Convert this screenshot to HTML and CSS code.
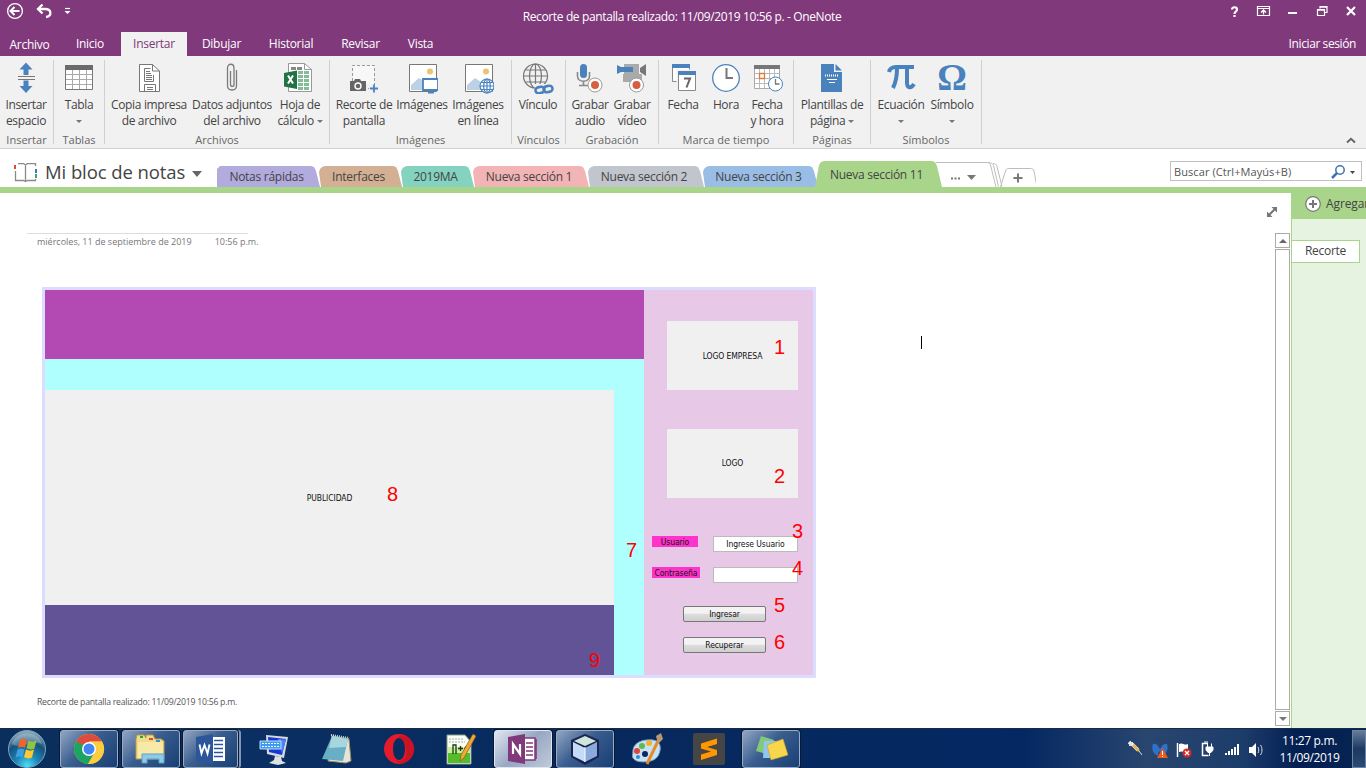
FILE: index.html
```html
<!DOCTYPE html>
<html lang="es">
<head>
<meta charset="utf-8">
<title>OneNote</title>
<link rel="stylesheet" href="styles.css">
</head>
<body>
<div class="app">
<header class="titlebar">
  <div class="quick">
    <svg width="80" height="24" viewBox="0 0 80 24" fill="none" stroke="#fff"><circle cx="15" cy="11" r="7.4" stroke-width="1.3"/><path d="M11 11h8.500M14.500 7l-4 4 4 4" stroke-width="2"/><path d="M39 9h6c7 0 7 7 1 8" stroke-width="2.300"/><path d="M42.500 4.500L38 9l4.500 4.500" stroke-width="2.300"/><path d="M65 8.500h5" stroke-width="1.200"/><path d="M64.500 11h6l-3 3z" fill="#fff" stroke="none"/></svg>
  </div>
  <div class="title">Recorte de pantalla realizado: 11/09/2019 10:56 p. - OneNote</div>
  <div class="winbtns">
    <svg width="146" height="24" viewBox="1220 0 146 24" fill="none" stroke="#fff"><path d="M1232 9.500c0-3 5-3 5 0 0 2-2.500 2-2.500 4.500M1234.500 15v2" stroke-width="2.200"/><path d="M1257.500 6.500h12v9h-12zM1257 8.500h13" stroke-width="1.200"/><path d="M1263.500 14.500v-4M1261 12.500l2.500-2.500 2.500 2.500" stroke-width="1.300"/><path d="M1288 13h9" stroke-width="2"/><path d="M1317.500 9.500h7v6h-7zM1317.500 10.200h7M1320 8.500v-2h7v6h-2M1320 7.200h7" stroke-width="1.200"/><path d="M1347 7l8 8M1355 7l-8 8" stroke-width="2.200"/></svg>
  </div>
</header>
<nav class="tabs">
  <a class="file">Archivo</a><a class="t-inicio">Inicio</a><a class="on">Insertar</a><a class="t-dib">Dibujar</a><a class="t-hist">Historial</a><a class="t-rev">Revisar</a><a class="t-vista">Vista</a><a class="login">Iniciar sesión</a>
</nav>
<section class="ribbon">
  <div class="group g1"><div class="btns">
    <div class="btn w52"><svg class="ic" viewBox="0 0 32 32"><path d="M16 0.500l6.500 7h-4v5.500h-5V7.500h-4zM16 31l6.500-7h-4v-5.500h-5V24h-4z" fill="#4a82bd"/><path d="M8 14.500h17M8 17.500h17" stroke="#777"/></svg><span>Insertar<br>espacio</span></div>
  </div><div class="cap">Insertar</div></div>
  <div class="group g2"><div class="btns">
    <div class="btn w50"><svg class="ic" viewBox="0 0 32 32"><path d="M2.500 3.500h27v24h-27z" fill="#fff" stroke="#777"/><path d="M2 3h28v5H2z" fill="#6b6b6b"/><path d="M3 12.500h26M3 17.500h26M3 22.500h26M9.500 8v19M16.500 8v19M23.500 8v19" stroke="#aaa"/></svg><span>Tabla<br><i class="dn"></i></span></div>
  </div><div class="cap">Tablas</div></div>
  <div class="group g3"><div class="btns">
    <div class="btn w84"><svg class="ic" viewBox="0 0 32 32" fill="none" stroke="#777"><path d="M6.500 2.500h13l7 6.500v20.500h-20z" fill="#fff"/><path d="M19.500 2.500v6.500h7"/><path d="M20.500 13v6.500h-9v-13h6M11.500 29V22.500h11V29"/><path d="M13 9.500h4M13 11.500h5M13 13.500h6M13 15.500h6M13 17.500h6M14 25.500h6M14 27.500h6"/></svg><span>Copia impresa<br>de archivo</span></div>
    <div class="btn w82"><svg class="ic" viewBox="0 0 32 32" fill="none" stroke="#7c7c7c" stroke-width="1.300"><path d="M20.500 8v15.500c0 6-9 6-9 0V6c0-5 6.500-5 6.500 0v16.500c0 2.600-3.500 2.600-3.500 0V9"/></svg><span>Datos adjuntos<br>del archivo</span></div>
    <div class="btn w54"><svg class="ic" viewBox="0 0 32 32"><path d="M4.500 1.500h16l7 6v22h-23z" fill="#fff" stroke="#999"/><path d="M20.500 1.500v6h7" fill="none" stroke="#999"/><path d="M7 5h5v3H7zM13 5h5v3h-5z" fill="#888"/><path d="M14 9h5v3h-5zM20 9h5v3h-5zM14 13h5v3h-5zM20 13h5v3h-5zM14 17h5v3h-5zM20 17h5v3h-5zM14 21h5v3h-5zM20 21h5v3h-5zM14 25h5v3h-5zM20 25h5v3h-5z" fill="#83bd98"/><path d="M0 11l13-2.500v18.500L0 24.500z" fill="#217346"/><path d="M4 13.500l5 8M9 13.500l-5 8" stroke="#fff" stroke-width="2"/></svg><span>Hoja de<br>cálculo <i class="dn"></i></span></div>
  </div><div class="cap">Archivos</div></div>
  <div class="group g4"><div class="btns">
    <div class="btn w60"><svg class="ic" viewBox="0 0 32 32"><path d="M4.500 19V3.500h22V23M15 26.500h6" fill="#f8f8f8" stroke="#999" stroke-dasharray="3 2"/><path d="M2 19h4l1-2h5l1 2h5v10H2z" fill="#666"/><circle cx="10" cy="24" r="3" fill="none" stroke="#fff" stroke-width="1.400"/><path d="M22 26.500h8M26 22.500v8" stroke="#4a82bd" stroke-width="1.800"/></svg><span>Recorte de<br>pantalla</span></div>
    <div class="btn w56"><svg class="ic" viewBox="0 0 32 32"><path d="M3.500 2.500h27v27h-27z" fill="#fff" stroke="#777"/><circle cx="24" cy="9.500" r="3" fill="#edc273"/><path d="M5 28V23l8-7 5 3v9z" fill="#bdd1e6"/><path d="M17 17h15v11H17z" fill="#fff" stroke="#4a82bd" stroke-width="1.800"/><path d="M22 30.500h6" stroke="#4a82bd" stroke-width="2"/></svg><span>Imágenes</span></div>
    <div class="btn w56"><svg class="ic" viewBox="0 0 32 32"><path d="M3.500 2.500h27v27h-27z" fill="#fff" stroke="#777"/><circle cx="24" cy="9.500" r="3" fill="#edc273"/><path d="M5 28V23l8-7 6 4v8z" fill="#bdd1e6"/><g fill="#fff" stroke="#4a82bd" stroke-width="1.200"><circle cx="25" cy="24" r="7"/><ellipse cx="25" cy="24" rx="3.300" ry="7"/><path d="M18 24h14M19 20.500h12M19 27.500h12M25 17v14"/></g></svg><span>Imágenes<br>en línea</span></div>
  </div><div class="cap">Imágenes</div></div>
  <div class="group g5"><div class="btns">
    <div class="btn w52"><svg class="ic" viewBox="0 0 32 32" fill="none"><g stroke="#777" stroke-width="1.200"><circle cx="13.500" cy="14" r="12"/><ellipse cx="13.500" cy="14" rx="6" ry="12"/><path d="M1.500 14h24M13.500 2v24M3.500 8h20M3.500 20h20"/></g><path d="M12 22h20v10H14z" fill="#f1f1f1"/><g stroke="#4a82bd" stroke-width="2.600"><rect x="13.500" y="25" width="9" height="6" rx="3" transform="rotate(-12 18 28)"/><rect x="21.500" y="24" width="9" height="6" rx="3" transform="rotate(-12 26 27)"/></g></svg><span>Vínculo</span></div>
  </div><div class="cap">Vínculos</div></div>
  <div class="group g6"><div class="btns">
    <div class="btn w42"><svg class="ic" viewBox="0 0 32 32"><rect x="6" y="2" width="7" height="14" rx="3.500" fill="#4a82bd"/><path d="M3.500 10v4c0 7 12 7 12 0v-4M9.500 19v4M5 23.500h9" fill="none" stroke="#888" stroke-width="1.600"/><circle cx="21" cy="23" r="7" fill="#fff" stroke="#999"/><circle cx="21" cy="23" r="4" fill="#d85e40"/></svg><span>Grabar<br>audio</span></div>
    <div class="btn w42"><svg class="ic" viewBox="0 0 32 32"><path d="M8 2h15v12H8z" fill="#aaa"/><path d="M7 12h19v8H7z" fill="#aaa"/><path d="M1 3l4 2h12v5H5l-4 2z" fill="#4a82bd"/><path d="M24 6l6-4v12l-6-4z" fill="#777"/><circle cx="20.500" cy="23" r="7" fill="#fff" stroke="#999"/><circle cx="20.500" cy="23" r="4" fill="#d85e40"/></svg><span>Grabar<br>vídeo</span></div>
  </div><div class="cap">Grabación</div></div>
  <div class="group g7"><div class="btns">
    <div class="btn w42"><svg class="ic" viewBox="0 0 32 32"><path d="M5.500 2.500h17v17h-17z" fill="#fff" stroke="#888"/><path d="M5 2h18v4H5z" fill="#4a82bd"/><path d="M9.500 7.500h21v23h-21z" fill="#f1f1f1"/><path d="M11.500 9.500h17v19h-17z" fill="#fff" stroke="#888"/><path d="M11 9h18v4H11z" fill="#4a82bd"/><path d="M17 16.500h6l-3.500 9" fill="none" stroke="#666" stroke-width="2"/></svg><span>Fecha</span></div>
    <div class="btn w44"><svg class="ic" viewBox="0 0 32 32" fill="none"><circle cx="16" cy="16" r="13.300" fill="#fff" stroke="#4a82bd" stroke-width="1.300"/><path d="M16.500 6v10H23" stroke="#777" stroke-width="2"/></svg><span>Hora</span></div>
    <div class="btn w38"><svg class="ic" viewBox="0 0 32 32" fill="none"><path d="M3.500 3.500h25v23h-25z" fill="#fff" stroke="#aaa"/><path d="M3 3h26v4H3z" fill="#777"/><path d="M4 11.500h24M4 16.500h24M4 21.500h24M8.500 7v19M13.500 7v19M18.500 7v19M23.500 7v19" stroke="#bbb"/><path d="M8.500 11.500h5v5h-5z" stroke="#e07b39" stroke-width="1.300"/><circle cx="24.500" cy="22" r="7" fill="#fff" stroke="#4a82bd"/><path d="M24.500 17v5h4" stroke="#777" stroke-width="1.300"/></svg><span>Fecha<br>y hora</span></div>
  </div><div class="cap">Marca de tiempo</div></div>
  <div class="group g8"><div class="btns">
    <div class="btn w76"><svg class="ic" viewBox="0 0 32 32"><path d="M5 2h13v8h8v20H5z" fill="#4a82bd"/><path d="M19.500 2l6.500 6.500h-6.500z" fill="#4a82bd"/><path d="M9 13.500h14" stroke="#fff" stroke-width="2" stroke-dasharray="1 1"/><path d="M11 17.500h10M13 20.500h6" stroke="#fff"/></svg><span>Plantillas de<br>página <i class="dn"></i></span></div>
  </div><div class="cap">Páginas</div></div>
  <div class="group g9"><div class="btns">
    <div class="btn w52"><svg class="ic" viewBox="0 0 32 32" fill="none" stroke="#4a82bd"><path d="M4 10c1-4 3-5 7-5h18" stroke-width="4"/><path d="M12 6c0 9-1 14-4 20" stroke-width="4"/><path d="M22 6v15c0 5 4 6 7 1" stroke-width="4"/></svg><span>Ecuación<br><i class="dn"></i></span></div>
    <div class="btn w50"><div class="ic glyph">Ω</div><span>Símbolo<br><i class="dn"></i></span></div>
  </div><div class="cap">Símbolos</div></div>
  <svg class="collapse" width="10" height="7" viewBox="0 0 10 7"><path d="M1 5.500l4-3.700 4 3.700" fill="none" stroke="#666" stroke-width="2"/></svg>
</section>
<section class="notebook">
  <svg class="book" width="24" height="20" viewBox="0 0 24 20" fill="none" stroke="#8a8a8a"><path d="M4 .5h5.500l2 1.500 2-1.500h8V3M1.500 8v9.500h8l2 1 2-1h8V16M11.500 2v16" stroke-width="1.300"/><path d="M1 2v4" stroke="#e04b2e" stroke-width="2"/><path d="M22 6v4" stroke="#3878b4" stroke-width="2"/><path d="M22 11v4" stroke="#3fa173" stroke-width="2"/></svg>
  <div class="nbname">Mi bloc de notas</div><i class="dn big"></i>
  <div class="sections">
    <div class="sec s1">Notas rápidas</div><div class="sec s2">Interfaces</div><div class="sec s3">2019MA</div><div class="sec s4">Nueva sección 1</div><div class="sec s5">Nueva sección 2</div><div class="sec s6">Nueva sección 3</div><div class="sec s7">Nueva sección 11</div>
    <svg class="more" width="100" height="26" viewBox="936 161 100 26" fill="none" stroke="#bdbdbd"><path d="M936 162.500h51c2 0 3 1 3.500 2.500l5.500 22M988 162.500c4 0 5 2 5.500 3l5 21M993 163.500c2 0 3.500 1 4 3l5 20" /><path d="M1000.500 187l5-16c.5-1.500 1-2.500 3-2.500h22c2 0 3 1 3.500 2.500l3 16"/><path d="M951 178.500h2M954.500 178.500h2M958 178.500h2" stroke="#777" stroke-width="2"/><path d="M967 175h9l-4.500 5z" fill="#777" stroke="none"/><path d="M1013.500 178h9M1018 173.500v9" stroke="#777" stroke-width="2"/></svg>
  </div>
  <div class="search"><span>Buscar (Ctrl+Mayús+B)</span><svg width="26" height="16" viewBox="0 0 26 16" fill="none"><circle cx="9" cy="6" r="4.200" stroke="#3c74b5" stroke-width="1.500"/><path d="M6 9L1 14" stroke="#3c74b5" stroke-width="2.500"/><path d="M19 7h5l-2.500 3z" fill="#444"/></svg></div>
</section>
<main class="work">
  <div class="page">
    <div class="note">
      <div class="dateline"><span>miércoles, 11 de septiembre de 2019</span><span>10:56 p.m.</span></div>
      <div class="mock">
        <div class="m-head"></div><div class="m-cyan"></div>
        <div class="m-pub">PUBLICIDAD</div><div class="m-foot"></div>
        <div class="m-side">
          <div class="logo">LOGO EMPRESA</div>
          <div class="logo second">LOGO</div>
          <div class="field"><label>Usuario</label><div class="input">Ingrese Usuario</div></div>
          <div class="field f2"><label class="l2">Contraseña</label><div class="input"></div></div>
          <div class="mbtn">Ingresar</div><div class="mbtn b2">Recuperar</div>
        </div>
        <b class="num n1">1</b><b class="num n2">2</b><b class="num n3">3</b><b class="num n4">4</b><b class="num n5">5</b><b class="num n6">6</b><b class="num n7">7</b><b class="num n8">8</b><b class="num n9">9</b>
      </div>
      <div class="caption">Recorte de pantalla realizado: 11/09/2019 10:56 p.m.</div>
    </div>
    <div class="caret"></div>
    <div class="rail">
      <svg class="expand" width="12" height="12" viewBox="0 0 12 12"><path d="M3 9l6-6" stroke="#777" stroke-width="2"/><path d="M5.500 1H11v5.500zM1 5.500V11h5.500z" fill="#777"/></svg>
      <div class="sbtn"><i class="up"></i></div><div class="thumb"></div><div class="sbtn"><i class="dn sdn"></i></div>
    </div>
  </div>
  <aside class="pages">
    <div class="add"><svg width="18" height="18" viewBox="0 0 18 18"><circle cx="9" cy="9" r="7.300" fill="#fff" stroke="#777" stroke-width="1.200"/><path d="M5 9h8M9 5v8" stroke="#777" stroke-width="2"/></svg><span>Agregar</span></div>
    <div class="pagetab">Recorte</div>
  </aside>
</main>
<footer class="taskbar">
  <div class="start"><svg width="40" height="40" viewBox="0 0 40 40"><defs><radialGradient id="orb" cx=".5" cy=".95" r=".9"><stop offset="0" stop-color="#4fe0f5"/><stop offset=".35" stop-color="#1c86b8"/><stop offset=".7" stop-color="#17517c"/><stop offset="1" stop-color="#85a6ba"/></radialGradient></defs><circle cx="20" cy="20" r="18.500" fill="url(#orb)" stroke="#7ba4bd"/><path d="M5 15c3-14 27-14 30 0-8-5-22 6-30 0z" fill="#fff" opacity=".25"/><path d="M13 11c3-2 5-1.500 7 0l-2 8c-2-1.500-4-1.500-7 0z" fill="#f0632c"/><path d="M21.500 11.500c3 1.500 5 1.500 8 0l-2 8c-3 1.500-5 1.200-8-.5z" fill="#8cc63e"/><path d="M10.500 20.500c3-1.500 5-1.500 7 0l-2 8c-2-1.500-4-1.500-7 0z" fill="#3b9fe0"/><path d="M19 20.500c3 1.500 5 1.500 8 0l-2 8c-3 1.500-5 1.200-8-.5z" fill="#fdc830"/></svg></div>
  <div class="slot"><div class="tb"><svg width="32" height="32" viewBox="0 0 32 32"><circle cx="16" cy="16" r="15" fill="#fbc116"/><path d="M16 16L3 8.500A15 15 0 0 1 29 8.500H16z" fill="#dd4b3e"/><path d="M3 8.500A15 15 0 0 0 15 31l7-12-6-3z" fill="#1da462"/><path d="M3 8.500L9.500 20l7-5z" fill="#1da462"/><path d="M16 8.500h13A15 15 0 0 1 15 31l7-12z" fill="#fccd40"/><circle cx="16" cy="16" r="7" fill="#fff"/><circle cx="16" cy="16" r="5.500" fill="#4285f4"/></svg></div></div>
  <div class="slot"><div class="tb"><svg width="36" height="34" viewBox="0 0 36 34"><path d="M3 7l1-4h7l2 3V3h7l2 4h6l3 2v18H3z" fill="#f2dc8c" stroke="#b99a45"/><path d="M5 10h25v16H5z" fill="#f9e9a9"/><path d="M7 4h3v2H7z" fill="#2aa63a"/><path d="M16 6h4v2h-4z" fill="#d84c30"/><path d="M23 8h4v2h-4z" fill="#348fd6"/><path d="M9 31V22h22v9h-5v-4H14v4z" fill="#8fcbe8" stroke="#5ba1c6"/></svg></div></div>
  <div class="slot"><div class="tb stack"><svg width="32" height="32" viewBox="0 0 32 32"><path d="M17 4h13v24H17z" fill="#fff"/><path d="M19 7.500h9M19 11.500h9M19 15.500h9M19 19.500h9M19 23.500h9" stroke="#2b579a" stroke-width="1.500"/><path d="M1 4l17-3v30L1 28z" fill="#2b579a"/><path d="M4.500 11.500l2 9 3-8.500 3 8.500 2-9" fill="none" stroke="#fff" stroke-width="1.900"/></svg></div></div>
  <div class="slot"><svg width="34" height="34" viewBox="0 0 34 34"><path d="M8 3l22 2-4 21-17-4z" fill="#d5d9dc"/><path d="M10 5l18 2-4 16-13-3z" fill="#1639d5"/><path d="M20 7l8 .5-4 14z" fill="#4e80fa"/><path d="M17 24l6 1 1 4 4 2-8 2-9-2 5-3z" fill="#dfe2e4"/><path d="M2 9h21v8H2z" fill="#3d9cf0" stroke="#bce0ff"/><path d="M4 11.500h17M4 14.500h17" stroke="#fff" stroke-dasharray="2 1"/></svg></div>
  <div class="slot"><svg width="34" height="34" viewBox="0 0 34 34"><path d="M12 4l17 3 2 22-5 2-18-2z" fill="#e5e4d8" stroke="#988b63"/><path d="M12 4l16 3-5 22L2 27z" fill="#68aec5"/><path d="M12 4l16 3-2 8-17 1z" fill="#a7d6df"/><path d="M11 3l18 3" stroke="#ddd" stroke-width="2" stroke-dasharray="1 1"/></svg></div>
  <div class="slot"><svg width="32" height="32" viewBox="0 0 32 32"><path fill-rule="evenodd" d="M16 1a15 15 0 1 0 0 30 15 15 0 0 0 0-30zM16 5c8 0 8 22 0 22S8 5 16 5z" fill="#e51b2c"/><path d="M21 2c14 6 14 23 0 28-4 1-7-.5-9-3 14 6 15-18 3-22 1-2 3-3 6-3z" fill="#b40b20" opacity=".5"/></svg></div>
  <div class="slot"><svg width="34" height="34" viewBox="0 0 34 34"><path d="M3 3h18l6 7v22H3z" fill="#fafff4" stroke="#8b9b87"/><path d="M4 20h22v11H4z" fill="#56bc2c"/><path d="M4 15h22v6H4z" fill="#c9ef9c"/><path d="M5 7h14M5 10h16" stroke="#aaa" stroke-dasharray="2 1"/><path d="M9 22v-9h3v9M14 16.500h5M16.500 14v5M20 16.500h4M22 14v5" fill="none" stroke="#183712" stroke-width="1.300"/><path d="M29 2l3 2-12 22-4 3 1-6z" fill="#edac30" stroke="#8f5825" stroke-width=".7"/></svg></div>
  <div class="slot"><div class="tb active"><svg width="32" height="32" viewBox="0 0 32 32"><path d="M17 5h11v22H17z" fill="#fff" stroke="#80397b" stroke-width="1.500"/><path d="M19 10h7M19 14h7M19 18h7M19 22h7M29 6v20" stroke="#80397b" stroke-width="1.600"/><path d="M1 4l17-3v30L1 28z" fill="#80397b"/><path d="M6 21V11l7 10V11" fill="none" stroke="#fff" stroke-width="2.200"/></svg></div></div>
  <div class="slot"><div class="tb"><svg width="34" height="34" viewBox="0 0 34 34"><path d="M17 2l14 6v17l-14 8-14-8V8z" fill="#1b2350"/><path d="M17 4l11 5-11 5L6 9z" fill="#cfe6dc"/><path d="M5 10l12 6v14L5 24z" fill="#c4daf6"/><path d="M29 10l-12 6v14l12-6z" fill="#8ba9dc"/><path d="M17 15v15" stroke="#fff"/></svg></div></div>
  <div class="slot"><svg width="34" height="34" viewBox="0 0 34 34"><path d="M3 18C4 10 14 7 23 8c8 1 9 9 5 16S9 31 5 28s-2-4-2-10z" fill="#c8e2f4" stroke="#789fc5"/><circle cx="15" cy="22" r="3" fill="#082b63"/><circle cx="7" cy="19" r="3" fill="#d94838"/><circle cx="12" cy="14" r="3" fill="#64b74c"/><circle cx="19" cy="11" r="3" fill="#edb331"/><circle cx="8" cy="25" r="2" fill="#3486d8"/><path d="M29 7L17 32" stroke="#e78b26" stroke-width="3"/><path d="M26 4l5-3 2 6-5 5z" fill="#b99871"/></svg></div>
  <div class="slot"><svg width="32" height="32" viewBox="0 0 32 32"><rect width="32" height="32" rx="2" fill="#454545"/><path d="M8 10.500l16-5v5.500l-10 3 10 3v5L8 27v-5.500l10-3-10-3z" fill="#ff9800"/></svg></div>
  <div class="slot"><div class="tb"><svg width="34" height="34" viewBox="0 0 34 34"><path d="M7 4l13 4-4 15L2 19z" fill="#83c977"/><path d="M10 9h14v17H9z" fill="#8fc7f3"/><path d="M13 13l16-6 5 16-17 5z" fill="#f7d64c" stroke="#c99c2a" stroke-width=".6"/></svg></div></div>
  <div class="tray">
    <svg width="145" height="24" viewBox="1123 736 145 24" fill="none"><path d="M1129 741l3 3M1132 743l6 6" stroke="#eee" stroke-width="3.500"/><path d="M1133 744l6 6" stroke="#e5b24b" stroke-width="2.500"/><path d="M1139 750l3 4M1129 745l4-4" stroke="#ddd"/><path d="M1153 743c4-1 5 2 7 5 2-3 4-6 7-5 2 5-1 11-5 12 0-4 0-3-2-5-2 2-2 2-2 5-5-2-7-7-5-12z" fill="#2e71c5"/><path d="M1162.500 747l5.500 10h-11z" fill="#ef5a1b"/><path d="M1162.500 750v4M1162.500 755v1" stroke="#fff"/><path d="M1177.500 742v14" stroke="#fff" stroke-width="1.500"/><path d="M1179 743c4-2 5 2 9 0v8c-4 2-5-2-9 0z" fill="#fff"/><circle cx="1187" cy="752" r="4.500" fill="#d72822"/><path d="M1185 750l4 4M1189 750l-4 4" stroke="#fff" stroke-width="1.300"/><path d="M1208 742.500h-5.500v12h6" stroke="#fff" stroke-width="1.500"/><path d="M1204 741h4" stroke="#fff"/><path d="M1206 746h7v3l-2 2.500h-3l-2-2.500zM1207.500 742.500v4M1211.500 742.500v4M1209.500 751v4" fill="#fff" stroke="#fff"/><path d="M1226 752v2M1229 750v4M1232 748v6M1235 746v8M1238 743v11" stroke="#fff" stroke-width="2"/><path d="M1249 746h3l4-4v14l-4-4h-3z" fill="#fff"/><path d="M1258 746c1 2 1 4 0 6M1260.500 744c2 3 2 7 0 10" stroke="#ddd"/></svg>
    <div class="clock">11:27 p.m.<br>11/09/2019</div><div class="desk"></div>
  </div>
</footer>
</div>
</body>
</html>
```
FILE: styles.css
```css
*{box-sizing:border-box}
body{margin:0;width:1366px;height:768px;overflow:hidden;font:12px/16px "Open Sans","Noto Sans",sans-serif;letter-spacing:-.27px;color:#444;background:#fff}
svg{display:block;flex:none}
.app{width:1366px;height:768px;display:flex;flex-direction:column;overflow:hidden}
.titlebar{height:32px;background:#80397b;color:#fff;display:grid;grid-template-columns:146px 1fr 146px;flex:none}
.title{text-align:center;padding:9px 2px 0 0;white-space:nowrap;letter-spacing:-.37px}
.tabs{height:24px;background:#80397b;color:#fff;display:flex;line-height:24px;flex:none;white-space:nowrap}
.tabs a{text-align:center}
.file{width:59px;line-height:26px}
.t-inicio{width:62px}
.on{width:66px;background:#f1f1f1;color:#80397b}
.t-dib{width:69px}
.t-hist{width:70px}
.t-rev{width:69px}
.t-vista{width:51px}
.tabs .login{margin-left:auto;padding-right:10px;letter-spacing:-.4px}
.ribbon{height:93px;background:#f1f1f1;border-bottom:1px solid #d0d0d0;display:flex;padding-top:4px;position:relative;flex:none}
.group{height:84px;border-right:1px solid #d0d0d0;display:flex;flex-direction:column;flex:none}
.g1{width:54px}.g2{width:51px}.g3{width:225px}.g4{width:182px}.g5{width:54px}.g6{width:93px}.g7{width:135px}.g8{width:77px}.g9{width:111px}
.btns{display:flex;height:72px;flex:none}
.g3 .btns{padding-left:2px}.g4 .btns{padding-left:4px}.g6 .btns,.g7 .btns{padding-left:3px}.g9 .btns{padding-left:4px}
.btn{display:flex;flex-direction:column;align-items:center;flex:none;padding-top:2px;text-align:center;white-space:nowrap;letter-spacing:-.35px}
.ic{width:32px;height:32px;margin-bottom:3px}
.glyph{font:bold 37px/32px "Liberation Serif",serif;color:#4a82bd;text-align:center;letter-spacing:0}
.w52{width:52px}.w50{width:50px}.w84{width:84px}.w82{width:82px}.w54{width:54px}.w60{width:60px}.w56{width:56px}.w42{width:42px}.w44{width:44px}.w38{width:38px}.w76{width:76px}
.cap{text-align:center;color:#666;font-size:11px;line-height:16px;letter-spacing:0;flex:none}
.dn{display:inline-block;border:3px solid transparent;border-top:3px solid #777;border-bottom:0;vertical-align:2px}
.up{display:block;border:4px solid transparent;border-bottom:4px solid #666;border-top:0}
.sdn{border-width:4px 4px 0}
.collapse{margin:77px 10px 0 auto}
.notebook{height:44px;border-bottom:6px solid #a9d58b;display:flex;flex:none;position:relative}
.book{margin:14px 0 0 14px}
.nbname{font-size:18.500px;line-height:28px;margin:9px 0 0 7px;width:141px;white-space:nowrap;letter-spacing:-.08px}
.dn.big{border-width:6px 5.500px 0;border-top-color:#666;margin:22px 0 0 6px;align-self:flex-start}
.sections{display:flex;align-items:flex-end;margin-left:15px;width:820px;flex:none}
.sec{height:21px;line-height:21px;text-align:center;white-space:nowrap;flex:none;padding-right:4px;margin-right:-1px;clip-path:polygon(2px 100%,0 6px,1px 3px,3px 1px,6px 0,calc(100% - 9px) 0,calc(100% - 6px) 1px,calc(100% - 4px) 5px,100% 100%)}
.s1{width:103px;background:#b2abde;clip-path:polygon(0 100%,0 3px,3px 0,calc(100% - 9px) 0,calc(100% - 6px) 1px,calc(100% - 4px) 5px,100% 100%)}
.s2{width:83px;background:#d3b094}.s3{width:73px;background:#84d3c0}.s4{width:116px;background:#f2b4b4}.s5{width:116px;background:#c1c5cd}.s6{width:115px;background:#99bde5}
.s7{width:127px;height:26px;line-height:27px;background:#a9d58b;margin-left:-2px;clip-path:polygon(0 100%,4px 4px,6px 1px,9px 0,calc(100% - 10px) 0,calc(100% - 7px) 1px,calc(100% - 5px) 5px,100% 100%)}
.more{margin-left:-5px}
.search{width:192px;height:20px;border:1px solid #c0c0c0;margin:12px 4px 0 auto;padding:2px 4px 0 3px;display:flex;justify-content:space-between;font-size:11px;letter-spacing:.08px;white-space:nowrap;color:#555}
.work{height:535px;display:flex;flex:none}
.page{width:1291px;display:flex;position:relative}
.note{width:1240px;padding:40px 0 0 27px;font-size:9px;line-height:16px;letter-spacing:0;color:#777}
.dateline{width:221px;border-top:1px solid #ddd;padding-left:10px;display:flex;gap:23px;white-space:nowrap}
.dateline span{flex:none}
.mock{margin:37px 0 0 15px;width:774px;height:391px;border:3px solid #dcdcff;display:grid;grid-template-columns:569px 30px 169px;grid-template-rows:69px 31px 215px 70px;position:relative;font:8.500px/12px "DejaVu Sans Condensed","DejaVu Sans",sans-serif;letter-spacing:-.1px;color:#111}
.m-head{grid-area:1/1/2/3;background:#b34ab3}
.m-cyan{grid-area:2/1/5/3;background:#afffff}
.m-pub{grid-area:3/1/4/2;background:#f0f0f0;display:flex;align-items:center;justify-content:center}
.m-foot{grid-area:4/1/5/2;background:#615396}
.m-side{grid-area:1/3/5/4;background:#e7c8e7;padding:31px 15px 0 8px;display:flex;flex-direction:column}
.logo{width:131px;height:69px;margin-left:15px;background:#f0f0f0;display:flex;align-items:center;justify-content:center}
.second{margin-top:39px;padding-bottom:2px}
.field{margin-top:38px;height:16px;display:flex;justify-content:space-between}
.f2{margin-top:15px}
.field label{width:46px;height:11px;line-height:12px;background:#ff33cc;text-align:center}
.field .l2{width:48px}
.input{width:85px;height:16px;background:#fff;border:1px solid #bbb;line-height:15px;text-align:center}
.mbtn{width:83px;height:16px;margin:23px 0 0 31px;border:1px solid #777;border-radius:2px;background:linear-gradient(#f3f3f3 45%,#ddd 50%,#cfcfcf);line-height:14px;text-align:center}
.b2{margin-top:15px}
.num{position:absolute;font:20px/20px "Liberation Sans",Arial,sans-serif;color:#f00;letter-spacing:0}
.n1{left:729px;top:47px}.n2{left:729px;top:176px}.n3{left:747px;top:231px}.n4{left:747px;top:268px}.n5{left:729px;top:305px}.n6{left:729px;top:342px}.n7{left:581px;top:250px}.n8{left:342px;top:194px}.n9{left:544px;top:360px}
.caption{padding:16px 0 0 10px;color:#555;font-size:8.700px;letter-spacing:-.25px}
.caret{position:absolute;left:921px;top:143px;width:1px;height:13px;background:#000}
.rail{width:51px;display:flex;flex-direction:column;align-items:flex-end;padding-right:1px}
.expand{margin:13px 12px 15px 0}
.sbtn{width:15px;height:15px;border:1px solid #aaa;display:flex;align-items:center;justify-content:center;flex:none}
.thumb{width:15px;flex:1;border:1px solid #aaa;margin:1px 0}
.sbtn:last-child{margin-bottom:2px}
.pages{width:75px;background:#e6f3e0;border-left:1px solid #a9d58b;overflow:hidden}
.add{height:26px;background:#a9d58b;display:flex;align-items:center;padding:0 0 4px 12px;gap:4px;white-space:nowrap;letter-spacing:-.1px}
.pagetab{margin-top:21px;width:68px;height:23px;line-height:20px;background:#fff;border:1px solid #a9d58b;border-left:0;text-align:center}
.taskbar{height:40px;background:linear-gradient(90deg,#0b2f5c,#0b2f63 20%,#07295d 45%,#052863 75%,#29466f 84%,#1c3c6a 91%,#031f52 95%,#062552);border-top:1px solid #172b49;display:flex;flex:none}
.start{width:58px;padding-left:7px;overflow:hidden}
.slot{width:62px;display:flex;align-items:center;justify-content:center;flex:none}
.tb{width:58px;height:38px;border:1px solid #9aabc2;border-radius:3px;box-shadow:0 0 0 1px #071933;background:linear-gradient(135deg,#91a5c3,#395d8e 45%,#183f75);display:flex;align-items:center;justify-content:center}
.stack{width:55px;margin-right:5px;box-shadow:0 0 0 1px #071933,3px 0 0 #8195b4}
.active{background:linear-gradient(135deg,#e1e6ef,#97a7c3 50%,#c0cada);border-color:#e0e6ef}
.tray{margin-left:auto;display:flex;align-items:center}
.clock{width:83px;color:#fff;text-align:center;line-height:17px;font-size:12px;letter-spacing:-.35px}
.desk{width:14px;height:38px;margin-left:1px;border:1px solid #71849d;background:linear-gradient(#657b9b,#1b3961 50%,#294c76)}
```
